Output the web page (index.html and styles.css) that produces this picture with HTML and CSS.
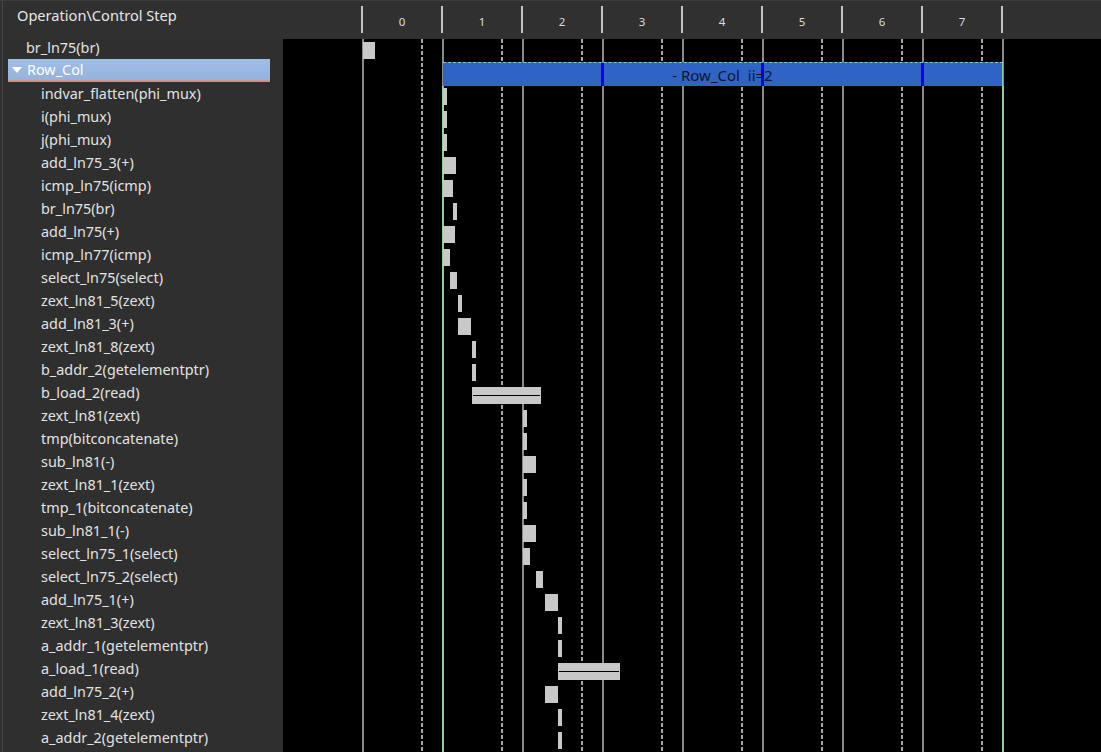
FILE: index.html
```html
<!DOCTYPE html>
<html>
<head>
<meta charset="utf-8">
<link rel="stylesheet" href="styles.css">
</head>
<body>
<div class="app">
  <div class="header">
    <div class="hdr-title">Operation\Control Step</div>
    <div class="steps">
      <div class="step">0</div><div class="step">1</div><div class="step">2</div><div class="step">3</div>
      <div class="step">4</div><div class="step">5</div><div class="step">6</div><div class="step last">7</div>
    </div>
  </div>
  <div class="main">
    <div class="tree">
      <div class="trow l0">br_ln75(br)</div>
      <div class="trow l0 sel"><span class="tri"></span>Row_Col</div>
      <div class="trow l1">indvar_flatten(phi_mux)</div>
      <div class="trow l1">i(phi_mux)</div>
      <div class="trow l1">j(phi_mux)</div>
      <div class="trow l1">add_ln75_3(+)</div>
      <div class="trow l1">icmp_ln75(icmp)</div>
      <div class="trow l1">br_ln75(br)</div>
      <div class="trow l1">add_ln75(+)</div>
      <div class="trow l1">icmp_ln77(icmp)</div>
      <div class="trow l1">select_ln75(select)</div>
      <div class="trow l1">zext_ln81_5(zext)</div>
      <div class="trow l1">add_ln81_3(+)</div>
      <div class="trow l1">zext_ln81_8(zext)</div>
      <div class="trow l1">b_addr_2(getelementptr)</div>
      <div class="trow l1">b_load_2(read)</div>
      <div class="trow l1">zext_ln81(zext)</div>
      <div class="trow l1">tmp(bitconcatenate)</div>
      <div class="trow l1">sub_ln81(-)</div>
      <div class="trow l1">zext_ln81_1(zext)</div>
      <div class="trow l1">tmp_1(bitconcatenate)</div>
      <div class="trow l1">sub_ln81_1(-)</div>
      <div class="trow l1">select_ln75_1(select)</div>
      <div class="trow l1">select_ln75_2(select)</div>
      <div class="trow l1">add_ln75_1(+)</div>
      <div class="trow l1">zext_ln81_3(zext)</div>
      <div class="trow l1">a_addr_1(getelementptr)</div>
      <div class="trow l1">a_load_1(read)</div>
      <div class="trow l1">add_ln75_2(+)</div>
      <div class="trow l1">zext_ln81_4(zext)</div>
      <div class="trow l1">a_addr_2(getelementptr)</div>
    </div>
    <div class="chart">
      <div class="grid">
        <div class="col"><span class="dash"></span></div>
        <div class="col"><span class="dash"></span></div>
        <div class="col"><span class="dash"></span></div>
        <div class="col"><span class="dash"></span></div>
        <div class="col"><span class="dash"></span></div>
        <div class="col"><span class="dash"></span></div>
        <div class="col"><span class="dash"></span></div>
        <div class="col last"><span class="dash"></span></div>
      </div>
      <div class="loop-region"></div>
      <div class="rows">
        <div class="crow"><span class="bar" style="margin-left:80px;width:12px"></span></div>
        <div class="crow"><div class="loop-bar" style="margin-left:160px;width:560px">
          <span class="mark" style="left:158px"></span>
          <span class="mark" style="left:318px"></span>
          <span class="mark" style="left:478px"></span>
          <span class="loop-label">- Row_Col  ii=2</span>
        </div></div>
        <div class="crow"><span class="bar" style="margin-left:160px;width:4px"></span></div>
        <div class="crow"><span class="bar" style="margin-left:160px;width:4px"></span></div>
        <div class="crow"><span class="bar" style="margin-left:160px;width:4px"></span></div>
        <div class="crow"><span class="bar" style="margin-left:160px;width:13px"></span></div>
        <div class="crow"><span class="bar" style="margin-left:160px;width:10px"></span></div>
        <div class="crow"><span class="bar" style="margin-left:170px;width:4px"></span></div>
        <div class="crow"><span class="bar" style="margin-left:160px;width:12px"></span></div>
        <div class="crow"><span class="bar" style="margin-left:160px;width:7px"></span></div>
        <div class="crow"><span class="bar" style="margin-left:167px;width:7px"></span></div>
        <div class="crow"><span class="bar" style="margin-left:175px;width:4px"></span></div>
        <div class="crow"><span class="bar" style="margin-left:175px;width:13px"></span></div>
        <div class="crow"><span class="bar" style="margin-left:189px;width:4px"></span></div>
        <div class="crow"><span class="bar" style="margin-left:189px;width:4px"></span></div>
        <div class="crow"><span class="bar split" style="margin-left:189px;width:69px"></span></div>
        <div class="crow"><span class="bar" style="margin-left:240px;width:4px"></span></div>
        <div class="crow"><span class="bar" style="margin-left:240px;width:4px"></span></div>
        <div class="crow"><span class="bar" style="margin-left:240px;width:13px"></span></div>
        <div class="crow"><span class="bar" style="margin-left:240px;width:4px"></span></div>
        <div class="crow"><span class="bar" style="margin-left:240px;width:4px"></span></div>
        <div class="crow"><span class="bar" style="margin-left:240px;width:13px"></span></div>
        <div class="crow"><span class="bar" style="margin-left:240px;width:7px"></span></div>
        <div class="crow"><span class="bar" style="margin-left:253px;width:7px"></span></div>
        <div class="crow"><span class="bar" style="margin-left:262px;width:13px"></span></div>
        <div class="crow"><span class="bar" style="margin-left:275px;width:4px"></span></div>
        <div class="crow"><span class="bar" style="margin-left:275px;width:4px"></span></div>
        <div class="crow"><span class="bar split" style="margin-left:275px;width:62px"></span></div>
        <div class="crow"><span class="bar" style="margin-left:262px;width:13px"></span></div>
        <div class="crow"><span class="bar" style="margin-left:275px;width:4px"></span></div>
        <div class="crow"><span class="bar" style="margin-left:275px;width:4px"></span></div>
      </div>
    </div>
  </div>
</div>
</body>
</html>
```

FILE: styles.css
```css
html, body {
  margin: 0;
  padding: 0;
}
body {
  width: 1101px;
  height: 752px;
  overflow: hidden;
  background: #2f2f2f;
  font-family: "Noto Sans", "DejaVu Sans", sans-serif;
  color: #e2e2e2;
}
.app {
  height: 752px;
  display: flex;
  flex-direction: column;
  box-sizing: border-box;
  border-top: 1px solid #3e3e3e;
}
.header {
  height: 38px;
  flex: none;
  display: flex;
  background: #303030;
}
.hdr-title {
  box-sizing: border-box;
  padding-left: 14px;
  padding-top: 1px;
  line-height: 26px;
  font-size: 14.6px;
  color: #e6e6e6;
  border-left: 1px solid #474747;
  margin-left: 2px;
  width: 359px;
  white-space: nowrap;
}
.steps {
  display: flex;
  margin-top: 5px;
  height: 27px;
}
.step {
  width: 80px;
  box-sizing: border-box;
  border-left: 2px solid #c4c4c4;
  display: flex;
  justify-content: center;
  align-items: center;
  padding-top: 4px;
  font-size: 11.5px;
  color: #dcdcdc;
}
.step.last {
  border-right: 2px solid #c4c4c4;
  width: 82px;
}
.main {
  flex: 1;
  display: flex;
  min-height: 0;
}
.tree {
  width: 280px;
  margin-left: 2px;
  border-left: 1px solid #474747;
  margin-top: -3px;
  padding-top: 0;
}
.trow {
  height: 23px;
  line-height: 22px;
  font-size: 14.4px;
  white-space: nowrap;
  box-sizing: border-box;
  margin-left: 5px;
  width: 262px;
  display: flex;
  align-items: center;
}
.trow.l0 {
  padding-left: 18px;
}
.trow.l1 {
  padding-left: 33px;
}
.trow.sel {
  background: linear-gradient(#a0bde4, #94b3dd);
  border-bottom: 2px solid #c9968e;
  color: #ffffff;
  padding-left: 3px;
}
.tri {
  width: 0;
  height: 0;
  border-left: 5px solid transparent;
  border-right: 5px solid transparent;
  border-top: 6px solid #ffffff;
  margin-right: 5px;
  margin-left: 1px;
}
.chart {
  flex: 1;
  position: relative;
  background: #000000;
  overflow: hidden;
}
.grid {
  position: absolute;
  inset: 0;
  display: flex;
  padding-left: 79px;
}
.col {
  width: 80px;
  box-sizing: border-box;
  border-left: 2px solid #8a8a8a;
  display: flex;
  flex: none;
}
.col.last {
  border-right: 2px solid #8a8a8a;
  width: 82px;
}
.dash {
  width: 2px;
  margin-left: 57px;
  background: repeating-linear-gradient(to bottom, #a8a8a8 0 4px, transparent 4px 6px);
}
.loop-region {
  position: absolute;
  left: 159px;
  width: 558px;
  top: 47px;
  bottom: 0;
  border-left: 2px solid #8fcf8f;
  border-right: 2px solid #8fcf8f;
}
.rows {
  position: relative;
}
.crow {
  height: 23px;
  display: flex;
  align-items: flex-start;
}
.bar {
  flex: none;
  height: 17px;
  margin-top: 3px;
  background: #c8c8c8;
  position: relative;
}
.bar.split::after {
  content: "";
  position: absolute;
  left: 1px;
  right: 1px;
  top: 8px;
  height: 1px;
  background: #000000;
}
.loop-bar {
  flex: none;
  height: 24px;
  box-sizing: border-box;
  background: #2f64c4;
  border-top: 1px dashed #7fd0a8;
  border-right: 1px solid #7fd0a8;
  position: relative;
  display: flex;
  justify-content: center;
  align-items: center;
}
.mark {
  position: absolute;
  top: 0;
  bottom: 0;
  width: 3px;
  background: #0000ee;
}
.loop-label {
  position: relative;
  white-space: pre;
  font-size: 15px;
  color: #0c1630;
  padding-top: 1px;
}
```
